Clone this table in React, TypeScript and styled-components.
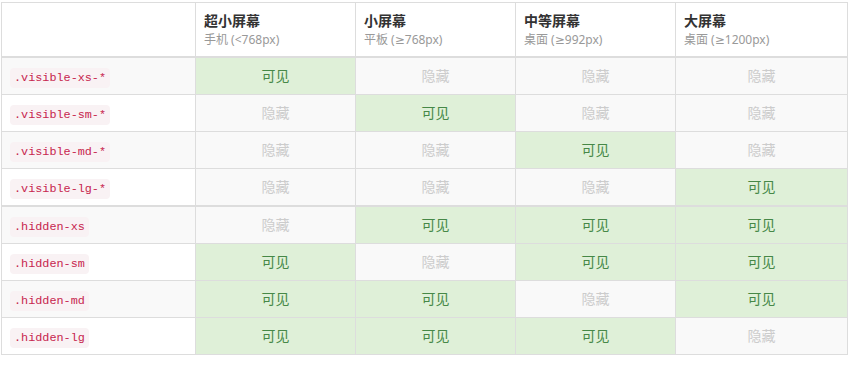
import React from "react";
import styled, { createGlobalStyle } from "styled-components";

const GlobalStyle = createGlobalStyle`
  html, body { margin: 0; padding: 0; background: #fff; }
  body {
    font-family: "Noto Sans", "DejaVu Sans", "Noto Sans CJK SC", sans-serif;
    font-size: 14px;
    line-height: 1.42857;
    color: #333;
  }
`;

const Page = styled.div`
  padding: 2px 0 0 1px;
`;

const Table = styled.table`
  width: 847px;
  border-collapse: collapse;
  border-spacing: 0;
  border: 1px solid #ddd;
  table-layout: fixed;
`;

const Head = styled.thead``;

const HeadCell = styled.th`
  padding: 8px;
  text-align: left;
  vertical-align: bottom;
  border: 1px solid #ddd;
  border-bottom: 2px solid #ddd;
  font-weight: 700;
  color: #333;
  line-height: 20px;
`;

const Sub = styled.small`
  display: block;
  font-weight: 400;
  color: #999;
  font-size: 12px;
  line-height: 17px;
`;

const Body = styled.tbody<{ $first?: boolean }>`
  border-top: ${(p) => (p.$first ? "0" : "2px solid #ddd")};
`;

const Row = styled.tr`
  height: 37px;
`;

const LabelCell = styled.td<{ $striped: boolean }>`
  padding: 8px;
  border: 1px solid #ddd;
  line-height: 20px;
  vertical-align: top;
  background: ${(p) => (p.$striped ? "#f9f9f9" : "#fff")};
`;

const StatusCell = styled.td<{ $visible: boolean }>`
  padding: 8px;
  border: 1px solid #ddd;
  line-height: 20px;
  text-align: center;
  vertical-align: top;
  background: ${(p) => (p.$visible ? "#dff0d8" : "#f9f9f9")};
  color: ${(p) => (p.$visible ? "#468847" : "#ccc")};
`;

const Code = styled.code`
  font-family: "Liberation Mono", "DejaVu Sans Mono", monospace;
  font-size: 11.8px;
  line-height: 1;
  padding: 3px 4px;
  color: #c7254e;
  background: #f9f2f4;
  border-radius: 4px;
`;

type R = { label: string; v: boolean[] };

const visibleRows: R[] = [
  { label: ".visible-xs-*", v: [true, false, false, false] },
  { label: ".visible-sm-*", v: [false, true, false, false] },
  { label: ".visible-md-*", v: [false, false, true, false] },
  { label: ".visible-lg-*", v: [false, false, false, true] },
];

const hiddenRows: R[] = [
  { label: ".hidden-xs", v: [false, true, true, true] },
  { label: ".hidden-sm", v: [true, false, true, true] },
  { label: ".hidden-md", v: [true, true, false, true] },
  { label: ".hidden-lg", v: [true, true, true, false] },
];

const heads = [
  { t: "超小屏幕", s: "手机 (<768px)" },
  { t: "小屏幕", s: "平板 (≥768px)" },
  { t: "中等屏幕", s: "桌面 (≥992px)" },
  { t: "大屏幕", s: "桌面 (≥1200px)" },
];

const Rows = ({ rows }: { rows: R[] }) => (
  <>
    {rows.map((r, idx) => (
      <Row key={r.label}>
        <LabelCell $striped={idx % 2 === 0}>
          <Code>{r.label}</Code>
        </LabelCell>
        {r.v.map((on, i) => (
          <StatusCell key={i} $visible={on}>
            {on ? "可见" : "隐藏"}
          </StatusCell>
        ))}
      </Row>
    ))}
  </>
);

export default function App() {
  return (
    <Page>
      <GlobalStyle />
      <Table>
        <colgroup>
          <col style={{ width: 194 }} />
          <col style={{ width: 160 }} />
          <col style={{ width: 160 }} />
          <col style={{ width: 160 }} />
          <col />
        </colgroup>
        <Head>
          <tr>
            <HeadCell />
            {heads.map((h) => (
              <HeadCell key={h.t}>
                {h.t}
                <Sub>{h.s}</Sub>
              </HeadCell>
            ))}
          </tr>
        </Head>
        <Body $first>
          <Rows rows={visibleRows} />
        </Body>
        <Body>
          <Rows rows={hiddenRows} />
        </Body>
      </Table>
    </Page>
  );
}
